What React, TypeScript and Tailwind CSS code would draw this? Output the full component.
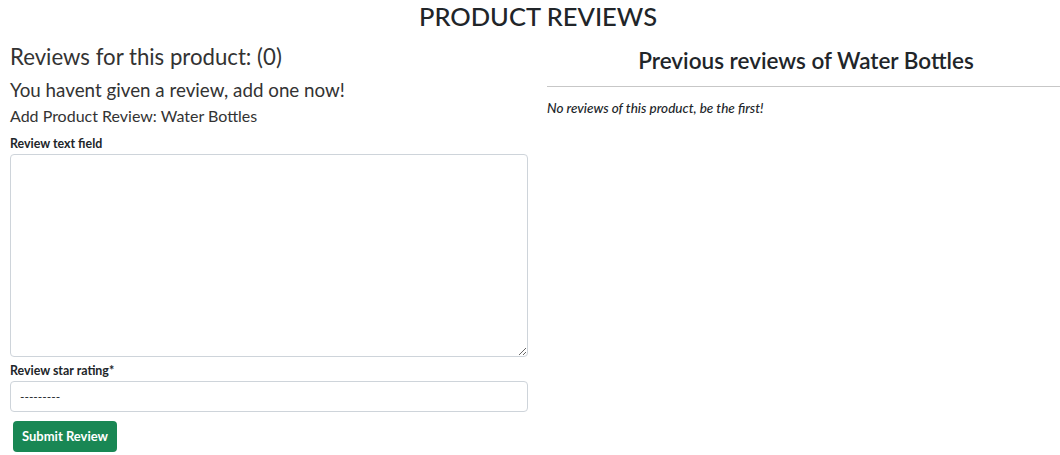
import React from "react";

export default function App() {
  return (
    <div className="w-[1060px] h-[455px] bg-white text-[#212529] overflow-hidden" style={{ fontFamily: "Lato, 'Noto Sans', sans-serif" }}>
      <h1 className="text-center text-[25.5px] font-medium leading-[30px] pt-[1px] pl-[16px]">PRODUCT REVIEWS</h1>
      <div className="flex">
        <div className="w-[538px] shrink-0 px-[10px]">
          <h2 className="text-[22.2px] font-normal leading-[26px] mt-[13px] text-[#333]">Reviews for this product: (0)</h2>
          <h3 className="text-[18.8px] font-normal leading-[24px] mt-[8px] text-[#333]">You havent given a review, add one now!</h3>
          <h4 className="text-[16px] font-normal leading-[20px] mt-[4px] text-[#333]">Add Product Review: Water Bottles</h4>
          <form className="mt-[10px]">
            <label className="block text-[12.4px] font-bold leading-[16px] mb-[2px]">Review text field</label>
            <textarea className="block w-full h-[203px] border border-[#ced4da] rounded-[4px] resize-y outline-none" />
            <label className="block text-[12.4px] font-bold leading-[16px] mt-[6px] mb-[2px]">Review star rating*</label>
            <div className="w-full h-[31px] border border-[#ced4da] rounded-[4px] flex items-center px-[9px] text-[12px]">---------</div>
            <button type="button" className="mt-[9px] ml-[3px] h-[31px] px-[9px] bg-[#198754] text-white text-[13px] font-bold rounded-[4px]">Submit Review</button>
          </form>
        </div>
        <div className="flex-1 pl-[14px]">
          <h2 className="text-center text-[22.5px] font-semibold leading-[26px] mt-[17px]">Previous reviews of Water Bottles</h2>
          <hr className="mt-[12px] -ml-[5px] border-t border-[#c7c7c7]" />
          <p className="mt-[13px] -ml-[5px] text-[13.5px] italic font-medium leading-[16px]">No reviews of this product, be the first!</p>
        </div>
      </div>
    </div>
  );
}
